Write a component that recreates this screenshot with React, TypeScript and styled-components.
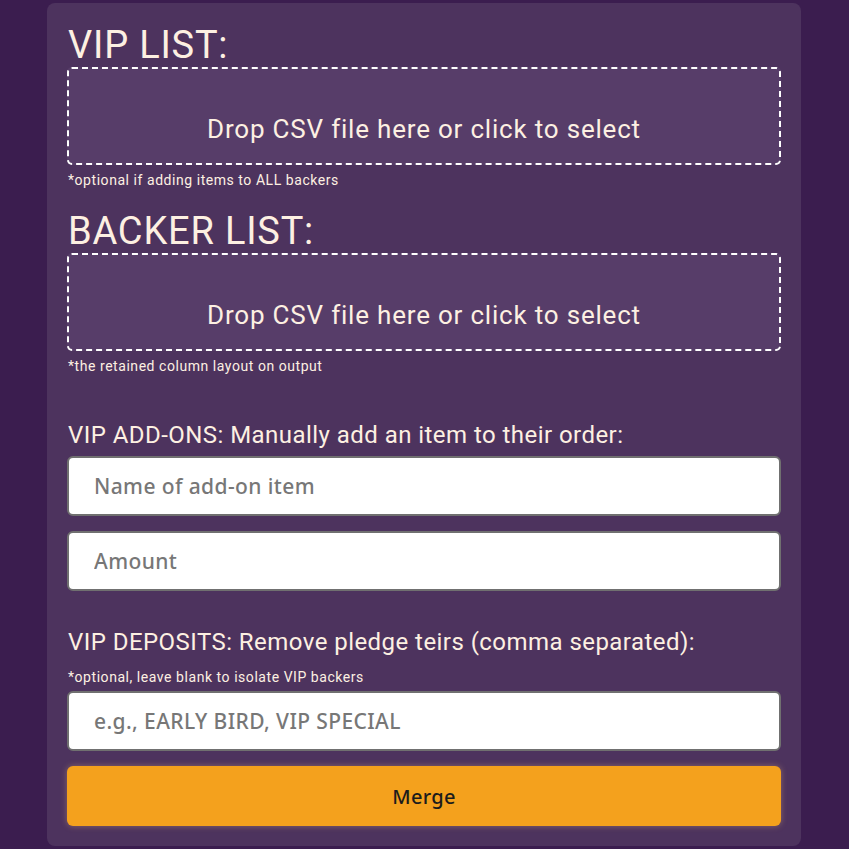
import React from "react";
import styled, { createGlobalStyle } from "styled-components";

const GlobalStyle = createGlobalStyle`
  html, body {
    margin: 0;
    padding: 0;
    background: #3b1d4f;
  }
  body {
    font-family: Roboto, "Liberation Sans", sans-serif;
  }
`;

const Page = styled.div`
  display: flex;
  justify-content: flex-start;
  padding: 3px 0 0 47px;
`;

const Panel = styled.div`
  width: 754px;
  box-sizing: border-box;
  background: #4d335e;
  border-radius: 8px;
  padding: 20px 20px 20px;
  display: flex;
  flex-direction: column;
`;

const Heading = styled.h2<{ $top?: number }>`
  margin: ${(p) => p.$top ?? 0}px 0 0 1px;
  font-family: Roboto, sans-serif;
  font-weight: 400;
  font-size: 38px;
  letter-spacing: 0.8px;
  line-height: 44px;
  color: #fdf0e2;
`;

const DropZone = styled.div`
  box-sizing: border-box;
  height: 98px;
  border: 2px dashed #ffffff;
  border-radius: 5px;
  background: #573d69;
  padding-top: 46px;
  text-align: center;
  font-size: 26px;
  letter-spacing: 0.8px;
  line-height: 28px;
  color: #fdf0e2;
  cursor: pointer;
`;

const Note = styled.div<{ $top?: number }>`
  margin: ${(p) => p.$top ?? 7}px 0 0 1px;
  font-size: 14px;
  letter-spacing: 0.55px;
  line-height: 16px;
  color: #fdf0e2;
`;

const Label = styled.div<{ $top: number }>`
  margin: ${(p) => p.$top}px 0 0 1px;
  font-size: 24px;
  letter-spacing: 0.45px;
  line-height: 26px;
  color: #fdf0e2;
`;

const Input = styled.input<{ $top: number }>`
  box-sizing: border-box;
  display: block;
  width: 100%;
  height: 60px;
  margin-top: ${(p) => p.$top}px;
  border: 2px solid #707070;
  border-radius: 6px;
  background: #ffffff;
  padding: 0 25px;
  font-family: "Noto Sans", sans-serif;
  font-weight: 500;
  font-size: 21px;
  letter-spacing: 0.4px;
  color: #333;
  outline: none;
  &::placeholder {
    color: #777777;
  }
`;

const MergeButton = styled.button`
  box-sizing: border-box;
  display: block;
  width: 100%;
  height: 60px;
  margin-top: 15px;
  border: none;
  border-radius: 6px;
  background: #f4a11d;
  box-shadow: 0 0 6px rgba(255, 200, 120, 0.35);
  font-family: "Noto Sans", sans-serif;
  font-weight: 500;
  font-size: 20px;
  letter-spacing: 0.3px;
  color: #1c1c1c;
  cursor: pointer;
`;

export default function App() {
  return (
    <>
      <GlobalStyle />
      <Page>
        <Panel>
          <Heading>VIP LIST:</Heading>
          <DropZone>Drop CSV file here or click to select</DropZone>
          <Note>*optional if adding items to ALL backers</Note>
          <Heading $top={21}>BACKER LIST:</Heading>
          <DropZone>Drop CSV file here or click to select</DropZone>
          <Note>*the retained column layout on output</Note>
          <Label $top={48}>VIP ADD-ONS: Manually add an item to their order:</Label>
          <Input $top={8} placeholder="Name of add-on item" />
          <Input $top={15} placeholder="Amount" />
          <Label $top={38}>VIP DEPOSITS: Remove pledge teirs (comma separated):</Label>
          <Note $top={14}>*optional, leave blank to isolate VIP backers</Note>
          <Input $top={6} placeholder="e.g., EARLY BIRD, VIP SPECIAL" />
          <MergeButton>Merge</MergeButton>
        </Panel>
      </Page>
    </>
  );
}
